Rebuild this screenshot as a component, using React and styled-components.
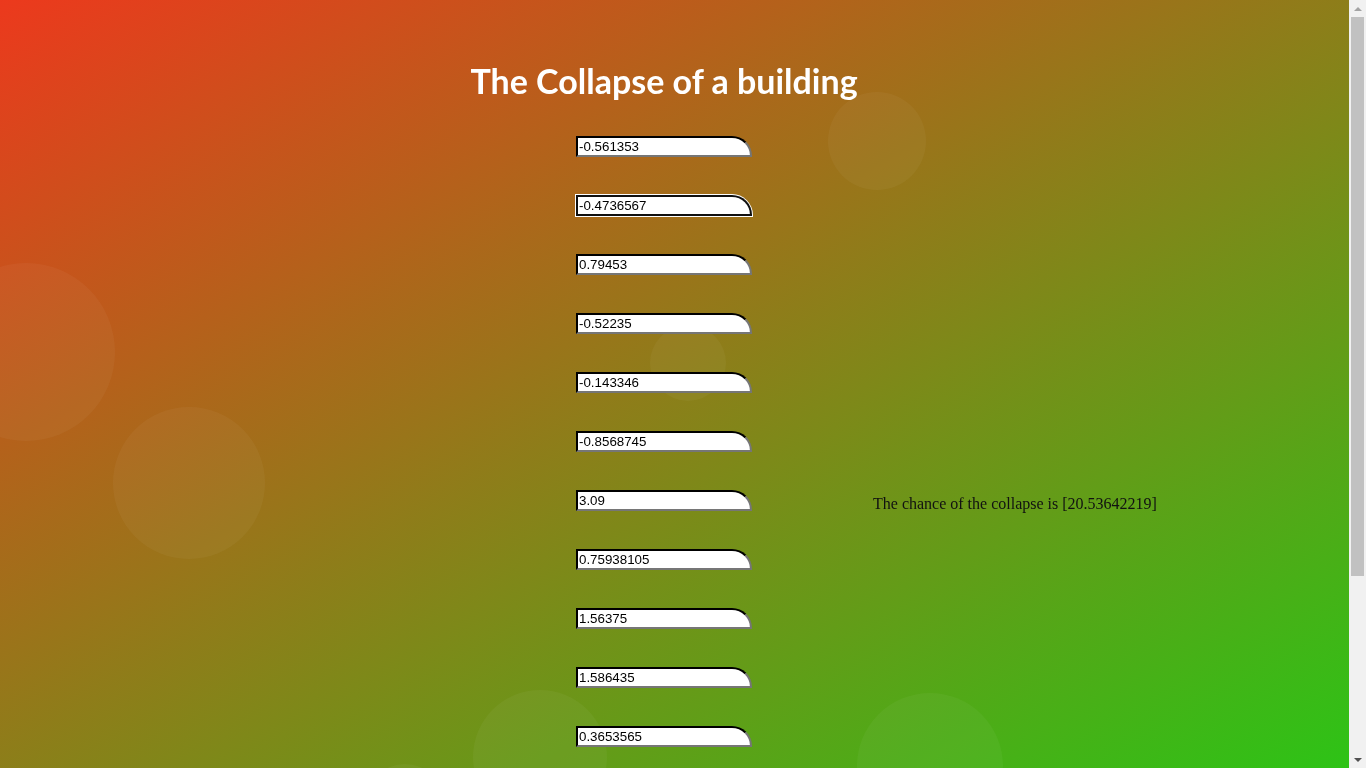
import React from 'react'
import styled, { createGlobalStyle, css } from 'styled-components'

const GlobalStyle = createGlobalStyle`
  html, body {
    margin: 0;
    padding: 0;
  }
  body {
    min-height: 100vh;
    background: linear-gradient(to bottom right, #ec391d, #2cc416) fixed;
    font-family: "Liberation Serif", serif;
  }
`;

const Bubbles = styled.div`
  position: fixed;
  inset: 0;
  overflow: hidden;
  pointer-events: none;
  z-index: 0;
`;

const Bubble = styled.span`
  position: absolute;
  border-radius: 50%;
  background: rgba(255, 255, 255, 0.04);
  width: ${p => p.$r * 2}px;
  height: ${p => p.$r * 2}px;
  left: ${p => p.$x - p.$r}px;
  top: ${p => p.$y - p.$r}px;
`;

// classic scrollbar rail drawn over the right edge
const Rail = styled.div`
  position: fixed;
  top: 0;
  right: 0;
  bottom: 0;
  z-index: 5;
  width: 17px;
  background: #f1f1f1;
  display: flex;
  flex-direction: column;
  align-items: center;
`;

const Arrow = styled.div`
  height: 17px;
  width: 17px;
  display: flex;
  align-items: center;
  justify-content: center;
  &::after {
    content: "";
    border-left: 4px solid transparent;
    border-right: 4px solid transparent;
    ${p => p.$down
      ? css`border-top: 4px solid #505050;`
      : css`border-bottom: 4px solid #a3a3a3;`}
  }
`;

const Track = styled.div`
  flex: 1;
  width: 13px;
`;

const Thumb = styled.div`
  height: 559px;
  background: #c1c1c1;
`;

const Page = styled.div`
  position: relative;
  z-index: 1;
  width: 1328px;
  padding: 60px 0 124px;
`;

const Title = styled.h1`
  margin: 0;
  text-align: center;
  color: #fff;
  font-family: Lato, "Open Sans", sans-serif;
  font-weight: 700;
  font-size: 34px;
  line-height: 42px;
`;

const Main = styled.div`
  display: grid;
  grid-template-columns: 1fr 176px 1fr;
  align-items: center;
  margin-top: 15px;
`;

const Form = styled.form`
  grid-column: 2;
  display: flex;
  flex-direction: column;
`;

const Field = styled.input`
  box-sizing: border-box;
  width: 176px;
  height: 21px;
  margin: 19px 0;
  padding: 1px 2px 1px 1px;
  font-family: "Liberation Sans", Arial, sans-serif;
  font-size: 13.33px;
  color: #000;
  background: #fff;
  border: 2px inset #767676;
  border-top-color: #1b1b1b;
  border-left-color: #1b1b1b;
  border-radius: 0 20px 0 0;
  outline: none;
  ${p => p.$active && css`
    border: 2px solid #101010;
    box-shadow: 0 0 0 1px #fff;
  `}
`;

const Result = styled.p`
  grid-column: 3;
  margin: 6px 0 0;
  padding-left: 121px;
  font-size: 16px;
  color: #111;
`;

const values = [
  '-0.561353',
  '-0.4736567',
  '0.79453',
  '-0.52235',
  '-0.143346',
  '-0.8568745',
  '3.09',
  '0.75938105',
  '1.56375',
  '1.586435',
  '0.3653565',
  '0.215',
  '-0.34452',
];

const bubbles = [
  { x: 877, y: 141, r: 49 },
  { x: 26, y: 352, r: 89 },
  { x: 189, y: 483, r: 76 },
  { x: 688, y: 363, r: 38 },
  { x: 540, y: 757, r: 67 },
  { x: 930, y: 766, r: 73 },
  { x: 405, y: 804, r: 40 },
];

export default function App() {
  return (
    <>
      <GlobalStyle />
      <Bubbles>
        {bubbles.map((b, i) => (
          <Bubble key={i} $x={b.x} $y={b.y} $r={b.r} />
        ))}
      </Bubbles>
      <Page>
        <Title>The Collapse of a building</Title>
        <Main>
          <Form onSubmit={e => e.preventDefault()}>
            {values.map((v, i) => (
              <Field key={i} type="text" defaultValue={v} $active={i === 1} />
            ))}
          </Form>
          <Result>The chance of the collapse is [20.53642219]</Result>
        </Main>
      </Page>
      <Rail>
        <Arrow />
        <Track>
          <Thumb />
        </Track>
        <Arrow $down />
      </Rail>
    </>
  )
}
